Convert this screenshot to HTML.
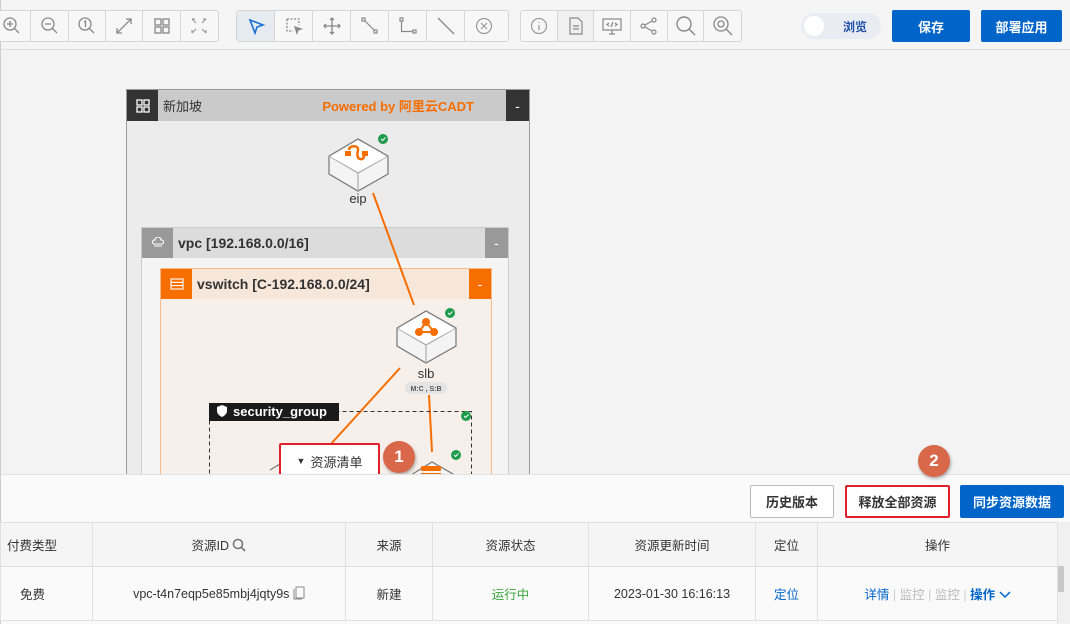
<!DOCTYPE html>
<html><head><meta charset="utf-8"><style>
*{box-sizing:border-box;margin:0;padding:0}
body{width:1070px;height:624px;overflow:hidden;background:#f3f3f3;font-family:"Liberation Sans","Noto Sans CJK SC",sans-serif;position:relative;font-size:12px;color:#333}
.abs{position:absolute}
.tb{position:absolute;top:0;left:0;width:1070px;height:50px;background:#f5f5f5;border-bottom:1px solid #ddd;border-left:1px solid #ccc}
.grp{position:absolute;top:10px;height:32px;border:1px solid #d6d6d6;border-radius:3px;display:flex;background:#f7f7f7}
.grp div{width:38px;height:30px;border-right:1px solid #d6d6d6;display:flex;align-items:center;justify-content:center}
.grp div:last-child{border-right:none}
.btn{position:absolute;display:flex;align-items:center;justify-content:center;font-size:13px;font-weight:bold;border-radius:2px}
.blue{background:#0064c8;color:#fff}
.hdr{position:absolute;display:flex;align-items:center;font-weight:bold;font-size:14px}
.sq{position:absolute;top:0;display:flex;align-items:center;justify-content:center;color:#fff;font-size:14px}
.circ{position:absolute;width:32px;height:32px;border-radius:50%;background:#d9674a;color:#fff;font-weight:bold;font-size:17px;display:flex;align-items:center;justify-content:center;box-shadow:1px 2px 3px rgba(0,0,0,.3)}
table{border-collapse:collapse;position:absolute;left:0;top:522px;font-size:12.5px}
td{border:1px solid #e0e0e0;text-align:center;color:#333}
</style></head><body>
<div class="tb">
 <div class="grp" style="left:-8px;width:226px">
  <div><svg width="20" height="20" viewBox="0 0 20 20" fill="none" stroke="#888" stroke-width="1.3"><circle cx="8" cy="8" r="6"/><path d="M12.5 12.5L17 17M5 8h6M8 5v6"/></svg></div>
  <div><svg width="20" height="20" viewBox="0 0 20 20" fill="none" stroke="#888" stroke-width="1.3"><circle cx="8" cy="8" r="6"/><path d="M12.5 12.5L17 17M5 8h6"/></svg></div>
  <div><svg width="20" height="20" viewBox="0 0 20 20" fill="none" stroke="#888" stroke-width="1.3"><circle cx="8" cy="8" r="6"/><path d="M12.5 12.5L17 17M7 6l1.5-1v6"/></svg></div>
  <div><svg width="20" height="20" viewBox="0 0 20 20" fill="none" stroke="#888" stroke-width="1.3"><path d="M3 17L17 3M12 3h5v5M3 12v5h5"/></svg></div>
  <div><svg width="18" height="18" viewBox="0 0 18 18" fill="none" stroke="#888" stroke-width="1.3"><rect x="2" y="2" width="6" height="6"/><rect x="10" y="2" width="6" height="6"/><rect x="2" y="10" width="6" height="6"/><rect x="10" y="10" width="6" height="6"/></svg></div>
  <div><svg width="18" height="18" viewBox="0 0 18 18" fill="none" stroke="#999" stroke-width="1.2"><path d="M2 2l4 4M2 2h3M16 2l-4 4M16 2h-3M2 16l4-4M2 16v-3M16 16l-4-4M16 16v-3"/></svg></div>
 </div>
 <div class="grp" style="left:235px;width:273px">
  <div style="background:#e6ebf2"><svg width="20" height="20" viewBox="0 0 20 20" fill="none" stroke="#1a6fd0" stroke-width="1.6"><path d="M4 4l13 5-6 2-2 6z"/></svg></div>
  <div><svg width="20" height="20" viewBox="0 0 20 20" fill="none" stroke="#888" stroke-width="1.3"><path d="M3 3h12v6M3 3v12h6" stroke-dasharray="2 1.5"/><path d="M11 11l6 2-3 1-1 3z" fill="#888"/></svg></div>
  <div><svg width="20" height="20" viewBox="0 0 20 20" fill="none" stroke="#888" stroke-width="1.3"><path d="M10 2v16M2 10h16M8 4l2-2 2 2M8 16l2 2 2-2M4 8l-2 2 2 2M16 8l2 2-2 2"/></svg></div>
  <div><svg width="20" height="20" viewBox="0 0 20 20" fill="none" stroke="#888" stroke-width="1.2"><rect x="2" y="2" width="3" height="3"/><rect x="14" y="14" width="3" height="3"/><path d="M5 5l9 9"/></svg></div>
  <div><svg width="20" height="20" viewBox="0 0 20 20" fill="none" stroke="#888" stroke-width="1.2"><rect x="2" y="2" width="3" height="3"/><rect x="15" y="14" width="3" height="3"/><path d="M3.5 5v10.5H15"/></svg></div>
  <div><svg width="20" height="20" viewBox="0 0 20 20" fill="none" stroke="#888" stroke-width="1.3"><path d="M2 2l16 16"/></svg></div>
  <div><svg width="20" height="20" viewBox="0 0 20 20" fill="none" stroke="#999" stroke-width="1.2"><circle cx="10" cy="10" r="7.5"/><path d="M7 7l6 6M13 7l-6 6"/></svg></div>
 </div>
 <div class="grp" style="left:519px;width:222px">
  <div><svg width="20" height="20" viewBox="0 0 20 20" fill="none" stroke="#999" stroke-width="1.2"><circle cx="10" cy="10" r="7.5"/><path d="M10 9v5M10 6v1"/></svg></div>
  <div style="background:#f0f0f0"><svg width="20" height="20" viewBox="0 0 20 20" fill="none" stroke="#888" stroke-width="1.2"><path d="M4 2h8l4 4v12H4zM7 10h6M7 13h6"/></svg></div>
  <div><svg width="22" height="20" viewBox="0 0 22 20" fill="none" stroke="#888" stroke-width="1.2"><rect x="2" y="3" width="18" height="11"/><path d="M8 18h6M11 14v4M8 7l-2 1.5L8 10M14 7l2 1.5-2 1.5M12 6l-2 5"/></svg></div>
  <div><svg width="20" height="20" viewBox="0 0 20 20" fill="none" stroke="#888" stroke-width="1.2"><circle cx="4" cy="10" r="2"/><circle cx="15" cy="4" r="2"/><circle cx="15" cy="16" r="2"/><path d="M6 9l7-4M6 11l7 4"/></svg></div>
  <div><svg width="22" height="22" viewBox="0 0 22 22" fill="none" stroke="#888" stroke-width="1.4"><circle cx="9" cy="9" r="7"/><path d="M14 14l6 6"/></svg></div>
  <div><svg width="22" height="22" viewBox="0 0 22 22" fill="none" stroke="#888" stroke-width="1.3"><circle cx="9" cy="9" r="7"/><path d="M14 14l6 6"/><circle cx="9" cy="9" r="3"/></svg></div>
 </div>
 <div class="abs" style="left:800px;top:13px;width:80px;height:26px;border-radius:13px;background:#e9ecf2"><div style="position:absolute;left:3px;top:3px;width:20px;height:20px;border-radius:50%;background:#fff"></div><span style="position:absolute;left:42px;top:5px;color:#1f4fa8;font-weight:bold;font-size:12px">浏览</span></div>
 <div class="btn blue" style="left:891px;top:10px;width:78px;height:32px">保存</div>
 <div class="btn blue" style="left:980px;top:10px;width:81px;height:32px">部署应用</div>
</div>

<div class="abs" style="left:0;top:50px;width:1px;height:424px;background:#ccc"></div>

<div class="abs" style="left:126px;top:89px;width:404px;height:390px;border:1px solid #999;background:#ececec">
 <div class="hdr" style="left:0;top:0;width:402px;height:31px;background:#cacaca;font-weight:normal;font-size:13px;color:#333"><span style="margin-left:36px">新加坡</span><span style="margin-left:auto;margin-right:55px;color:#f66e00;font-weight:bold">Powered by 阿里云CADT</span></div>
 <div class="sq" style="left:0;width:31px;height:31px;background:#333"><svg width="14" height="14" viewBox="0 0 14 14" fill="none" stroke="#fff" stroke-width="1.3"><rect x="1" y="1" width="5" height="5"/><rect x="8" y="1" width="5" height="5"/><rect x="1" y="8" width="5" height="5"/><rect x="8" y="8" width="5" height="5"/></svg></div>
 <div class="sq" style="left:379px;width:23px;height:31px;background:#333">-</div>
 <div class="abs" style="left:14px;top:137px;width:368px;height:260px;border:1px solid #ccc;background:#f4f4f4">
  <div class="hdr" style="left:0;top:0;width:366px;height:30px;background:#dcdcdc;color:#333"><span style="margin-left:36px">vpc [192.168.0.0/16]</span></div>
  <div class="sq" style="left:0;width:31px;height:30px;background:#999"><svg width="14" height="12" viewBox="0 0 14 12" fill="none" stroke="#fff" stroke-width="1.1"><path d="M3 7a2 2 0 0 1 1-4 3 3 0 0 1 6 0 2 2 0 0 1 1 4zM3 9h8"/></svg></div>
  <div class="sq" style="left:343px;width:23px;height:30px;background:#999">-</div>
  <div class="abs" style="left:18px;top:40px;width:332px;height:220px;border:1px solid #f7b98c;background:#f7f0ea">
   <div class="hdr" style="left:0;top:0;width:330px;height:30px;background:#f7e6da;color:#333"><span style="margin-left:36px">vswitch [C-192.168.0.0/24]</span></div>
   <div class="sq" style="left:0;width:31px;height:30px;background:#f66e00"><svg width="14" height="12" viewBox="0 0 14 12" fill="none" stroke="#fff" stroke-width="1.1"><rect x="1" y="1" width="12" height="10"/><path d="M1 4.3h12M1 7.6h12"/></svg></div>
   <div class="sq" style="left:308px;width:22px;height:30px;background:#f66e00">-</div>
  </div>
 </div>
</div>

<svg class="abs" style="left:0;top:0" width="1070" height="624">
 <g stroke="#f66e00" stroke-width="2"><path d="M373 193L414 305M400 368L330 445M429 395L432 452"/></g>
 <rect x="209.5" y="411.5" width="262" height="70" fill="none" stroke="#333" stroke-dasharray="4 3"/>
 <rect x="209" y="403" width="130" height="18" fill="#1a1a1a"/>
 <path d="M217 407l5-2 5 2v4c0 3-3 5-5 6-2-1-5-3-5-6z" fill="#fff"/>
 <text x="233" y="416" fill="#fff" font-size="13" font-weight="bold" font-family="Liberation Sans">security_group</text>
 <g stroke="#777" stroke-width="1.2">
  <path d="M329 156L358 139L388 156L388 174L358 191L329 174Z" fill="#f4f4f4"/>
  <path d="M329 156L358 173L388 156M358 173V191" fill="none" stroke="#aaa"/>
  <path d="M331 157L358 141L386 157L358 172Z" fill="#fff" stroke="none"/>
 </g>
 <path d="M349 150c0-5 10-5 9 0s-1 8 2 9c4 1 5-4 3-5" fill="none" stroke="#f66e00" stroke-width="2.5"/>
 <rect x="345" y="151" width="6" height="5" fill="#f66e00"/><rect x="362" y="151" width="6" height="5" fill="#f66e00"/>
 <circle cx="383" cy="139" r="5" fill="#1f9b4c"/><path d="M381 139l1.5 1.5 3-3" stroke="#fff" fill="none"/>
 <text x="358" y="203" text-anchor="middle" font-size="13" fill="#333" font-family="Liberation Sans">eip</text>
 <g stroke="#777" stroke-width="1.2">
  <path d="M397 328L426 311L456 328L456 346L426 363L397 346Z" fill="#f4f4f4"/>
  <path d="M397 328L426 345L456 328M426 345V363" fill="none" stroke="#aaa"/>
  <path d="M399 329L426 313L454 329L426 344Z" fill="#fff" stroke="none"/>
 </g>
 <g fill="#f66e00"><circle cx="426" cy="322" r="4"/><circle cx="419" cy="332" r="4"/><circle cx="434" cy="332" r="4"/></g>
 <path d="M426 322L419 332H434Z" fill="none" stroke="#f66e00" stroke-width="2"/>
 <circle cx="450" cy="313" r="5" fill="#1f9b4c"/><path d="M448 313l1.5 1.5 3-3" stroke="#fff" fill="none"/>
 <text x="426" y="378" text-anchor="middle" font-size="13" fill="#333" font-family="Liberation Sans">slb</text>
 <rect x="405" y="382" width="42" height="12" rx="6" fill="#e4e4e4"/>
 <text x="426" y="391" text-anchor="middle" font-size="7" font-weight="bold" fill="#555" font-family="Liberation Sans">M:C , S:B</text>
 <circle cx="466" cy="416" r="5" fill="#1f9b4c"/><path d="M464 416l1.5 1.5 3-3" stroke="#fff" fill="none"/>
 <circle cx="456" cy="455" r="5" fill="#1f9b4c"/><path d="M454 455l1.5 1.5 3-3" stroke="#fff" fill="none"/>
 <path d="M411 475L432 462L460 478" fill="#f4f4f4" stroke="#777" stroke-width="1.2"/>
 <rect x="421" y="466" width="20" height="5" rx="1" fill="#f66e00"/><rect x="421" y="473" width="20" height="4" fill="#f66e00"/>
 <path d="M270 470L290 458" stroke="#777" stroke-width="1.2"/>
</svg>

<div class="btn" style="left:279px;top:443px;width:101px;height:36px;border:2px solid #e0202a;background:#fff;font-weight:normal;color:#333;font-size:13px"><span style="font-size:9px;margin-right:5px">▼</span>资源清单</div>
<div class="circ" style="left:383px;top:441px">1</div>

<div class="abs" style="left:0;top:474px;width:1070px;height:150px;background:#fafafa;border-top:1px solid #e2e2e2;border-left:1px solid #ccc"></div>
<div class="btn" style="left:750px;top:485px;width:84px;height:33px;border:1px solid #bbb;background:#fff;color:#333">历史版本</div>
<div class="btn" style="left:845px;top:485px;width:105px;height:33px;border:2px solid #e0202a;background:#fff;color:#333">释放全部资源</div>
<div class="btn blue" style="left:960px;top:485px;width:104px;height:33px">同步资源数据</div>
<div class="circ" style="left:918px;top:445px">2</div>

<table>
<tr style="height:44px;background:#f5f5f5"><td style="width:92px;text-align:left;padding-left:6px">付费类型</td><td style="width:253px">资源ID <svg width="14" height="14" viewBox="0 0 14 14" style="vertical-align:-2px" fill="none" stroke="#777" stroke-width="1.6"><circle cx="6" cy="6" r="4.5"/><path d="M9.5 9.5L13 13"/></svg></td><td style="width:87px">来源</td><td style="width:156px">资源状态</td><td style="width:167px">资源更新时间</td><td style="width:62px">定位</td><td style="width:240px">操作</td></tr>
<tr style="height:54px;background:#fafafa"><td style="text-align:left;padding-left:19px">免费</td><td>vpc-t4n7eqp5e85mbj4jqty9s <svg width="12" height="14" viewBox="0 0 12 14" style="vertical-align:-2px" fill="none" stroke="#888"><path d="M3 1h8v11H3zM1 3v10h8"/></svg></td><td>新建</td><td style="color:#3aa63a">运行中</td><td>2023-01-30 16:16:13</td><td style="color:#0064c8">定位</td><td><span style="color:#0064c8">详情</span> <span style="color:#ccc">|</span> <span style="color:#bbb">监控</span> <span style="color:#ccc">|</span> <span style="color:#bbb">监控</span> <span style="color:#ccc">|</span> <span style="color:#0064c8;font-weight:bold">操作 <svg width="12" height="8" viewBox="0 0 12 8" fill="none" stroke="#0064c8" stroke-width="1.5"><path d="M1 1l5 5 5-5"/></svg></span></td></tr>
</table>
<div class="abs" style="left:1057px;top:522px;width:13px;height:102px;background:#f0f0f0;border-left:1px solid #e0e0e0"></div>
<div class="abs" style="left:1058px;top:566px;width:6px;height:26px;background:#c8c8c8"></div>
</body></html>
